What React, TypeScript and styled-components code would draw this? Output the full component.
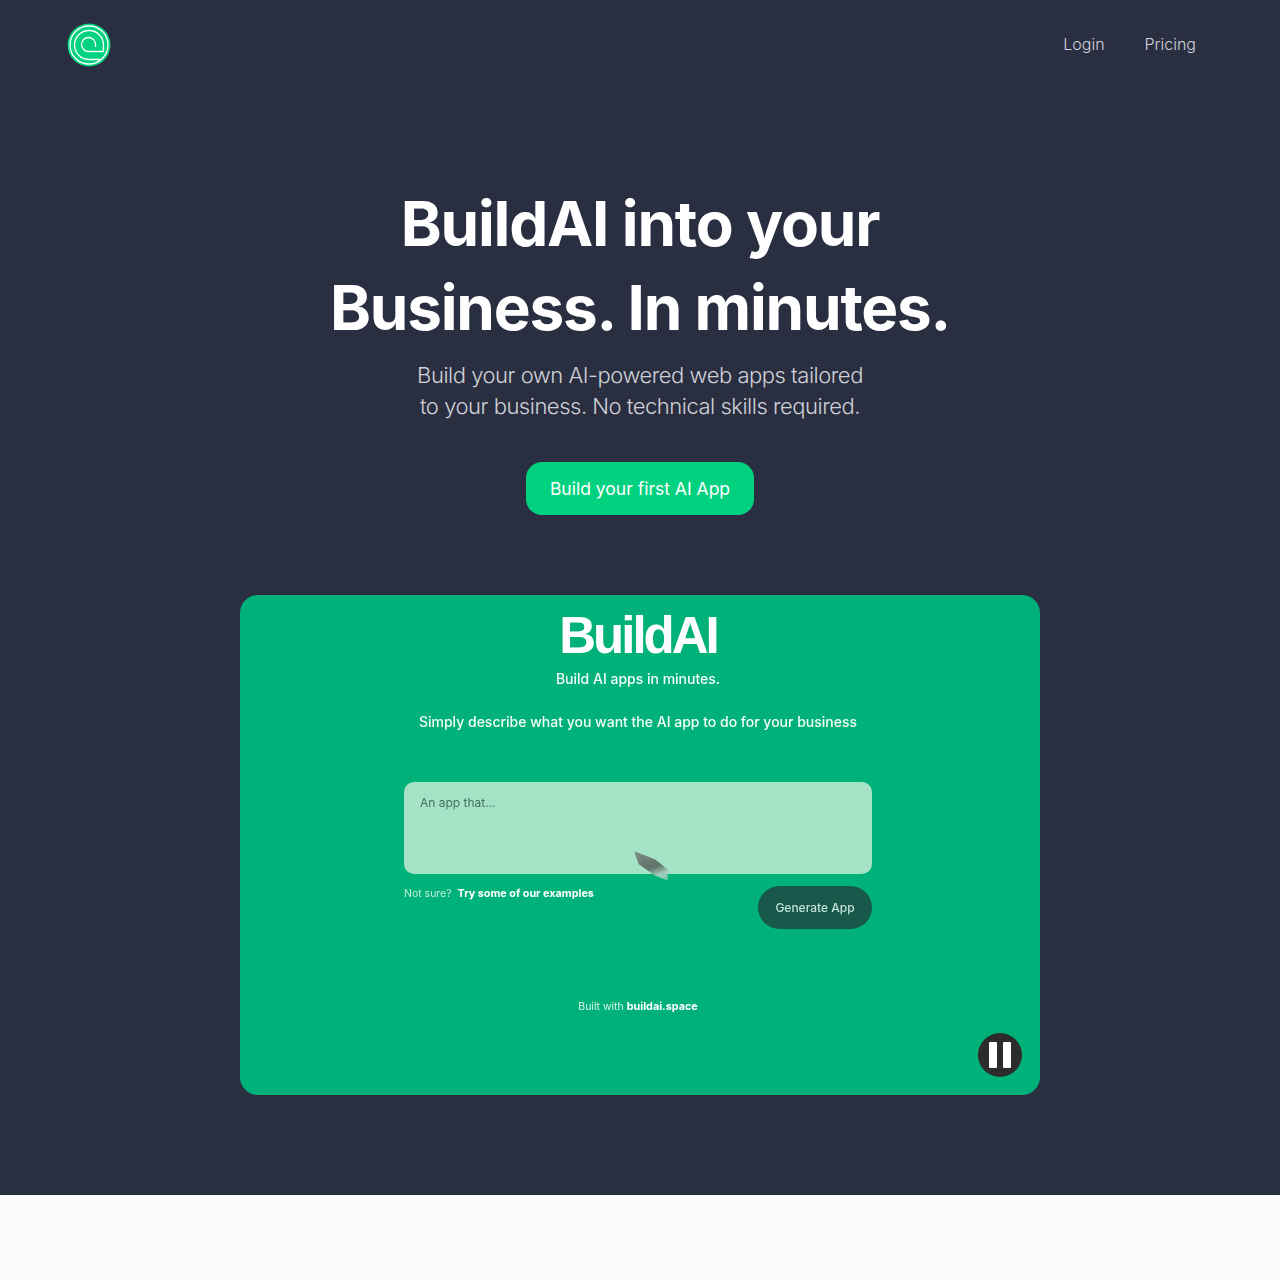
import React from 'react';
import styled, { createGlobalStyle } from 'styled-components';

const GlobalStyle = createGlobalStyle`
  html, body {
    margin: 0;
    padding: 0;
    background: #fbfbfb;
  }
  * {
    box-sizing: border-box;
  }
`;

const Logo = () => (
  <svg width="44" height="44" viewBox="0 0 44 44" fill="none">
    <circle cx="22" cy="22" r="21.5" fill="#02d180" />
    <g stroke="#fff" strokeWidth="1.3" strokeLinejoin="round">
      <circle cx="22" cy="22" r="19" />
      <path d="M33.5 36.5H22A14.5 14.5 0 1 1 36.5 22V28.5H21.5A7 7 0 1 1 28.5 21.5V24" />
    </g>
  </svg>
);

const App = () => (
  <>
    <GlobalStyle />
    <Hero>
      <Nav>
        <Logo />
        <NavLinks>
          <NavLink>Login</NavLink>
          <NavLink>Pricing</NavLink>
        </NavLinks>
      </Nav>
      <Headline>
        BuildAI into your
        <br />
        Business. In minutes.
      </Headline>
      <Sub>
        Build your own AI-powered web apps tailored
        <br />
        to your business. No technical skills required.
      </Sub>
      <Cta>Build your first AI App</Cta>
      <Video>
        <VideoInner>
          <Brand>BuildAI</Brand>
          <Tagline>Build AI apps in minutes.</Tagline>
          <Describe>Simply describe what you want the AI app to do for your business</Describe>
          <PromptBox>An app that...</PromptBox>
          <PromptFooter>
            <Examples>
              Not sure? <b>Try some of our examples</b>
            </Examples>
            <Generate>Generate App</Generate>
          </PromptFooter>
          <Built>
            Built with <b>buildai.space</b>
          </Built>
        </VideoInner>
        <Cursor />
        <Pause aria-label="Pause">
          <PauseBar />
          <PauseBar />
        </Pause>
      </Video>
    </Hero>
    <Below />
  </>
);

const Hero = styled.section`
  background: #292e41;
  height: 1195px;
  display: flex;
  flex-direction: column;
  align-items: center;
  font-family: 'Inter', 'Liberation Sans', sans-serif;
`;

const Nav = styled.nav`
  width: 100%;
  display: flex;
  align-items: center;
  justify-content: space-between;
  padding: 23px 84px 0 67px;
`;

const NavLinks = styled.div`
  display: flex;
  gap: 40px;
  margin-top: -2px;
`;

const NavLink = styled.a`
  color: #d2d4da;
  font-size: 16px;
  font-weight: 300;
`;

const Headline = styled.h1`
  margin: 115px 0 0;
  color: #fff;
  font-size: 62px;
  line-height: 84px;
  font-weight: 700;
  letter-spacing: -1.2px;
  text-align: center;
`;

const Sub = styled.p`
  margin: 10px 0 0;
  color: #d0d1d6;
  font-size: 22px;
  line-height: 31px;
  font-weight: 300;
  letter-spacing: -0.48px;
  text-align: center;
`;

const Cta = styled.button`
  margin-top: 40px;
  width: 228px;
  height: 53px;
  border: 0;
  border-radius: 16px;
  background: #02d180;
  color: #fff;
  font-family: inherit;
  font-size: 17.5px;
  font-weight: 400;
`;

const Video = styled.div`
  position: relative;
  margin-top: 80px;
  width: 800px;
  height: 500px;
  border-radius: 18px;
  background: #00b27a;
  overflow: hidden;
`;

const VideoInner = styled.div`
  width: 468px;
  margin-left: 164px;
  display: flex;
  flex-direction: column;
  align-items: center;
  filter: blur(0.75px);
`;

const Brand = styled.div`
  margin-top: 13px;
  color: #fff;
  font-family: 'Liberation Sans', Arial, sans-serif;
  font-size: 51px;
  line-height: 56px;
  font-weight: 700;
  letter-spacing: -3px;
`;

const Tagline = styled.div`
  margin-top: 5px;
  color: #f2fcf8;
  font-size: 14px;
  line-height: 20px;
  font-weight: 500;
`;

const Describe = styled.div`
  margin-top: 23px;
  color: #f2fcf8;
  font-size: 14px;
  line-height: 20px;
  font-weight: 500;
  white-space: nowrap;
`;

const PromptBox = styled.div`
  margin-top: 50px;
  width: 100%;
  height: 92px;
  padding: 13px 16px;
  border-radius: 10px;
  background: #a5e2c6;
  color: #3f6f5c;
  font-size: 12px;
  line-height: 16px;
`;

const PromptFooter = styled.div`
  margin-top: 12px;
  width: 100%;
  display: flex;
  align-items: flex-start;
  justify-content: space-between;
`;

const Examples = styled.div`
  margin-top: 1px;
  color: #c4eedc;
  font-size: 10.5px;
  line-height: 14px;

  b {
    margin-left: 3px;
    color: #fff;
    font-size: 10.8px;
    font-weight: 700;
  }
`;

const Generate = styled.div`
  width: 114px;
  height: 43px;
  display: flex;
  align-items: center;
  justify-content: center;
  border-radius: 22px;
  background: #17584b;
  color: #c4e2d8;
  font-size: 12px;
  font-weight: 500;
`;

const Built = styled.div`
  margin-top: 71px;
  color: #d8f4e8;
  font-size: 10.5px;
  line-height: 14px;

  b {
    color: #fff;
    font-size: 10.8px;
    font-weight: 700;
  }
`;

const Cursor = styled.div`
  position: absolute;
  left: 394px;
  top: 256px;
  width: 34px;
  height: 30px;
  background: linear-gradient(160deg, #7f9188 0%, #5f7068 55%, #a6d3bf 78%, #5fc79f 100%);
  clip-path: polygon(0 0, 62% 28%, 100% 62%, 100% 100%, 62% 82%, 14% 44%);
  filter: blur(1.2px);
`;

const Pause = styled.div`
  position: absolute;
  right: 18px;
  bottom: 18px;
  width: 44px;
  height: 44px;
  display: flex;
  align-items: center;
  justify-content: center;
  gap: 6px;
  border-radius: 50%;
  background: #2c2c2c;
`;

const PauseBar = styled.span`
  width: 8px;
  height: 26px;
  border-radius: 1px;
  background: #fff;
`;

const Below = styled.div`
  height: 85px;
  background: #fbfbfb;
`;

export default App;
